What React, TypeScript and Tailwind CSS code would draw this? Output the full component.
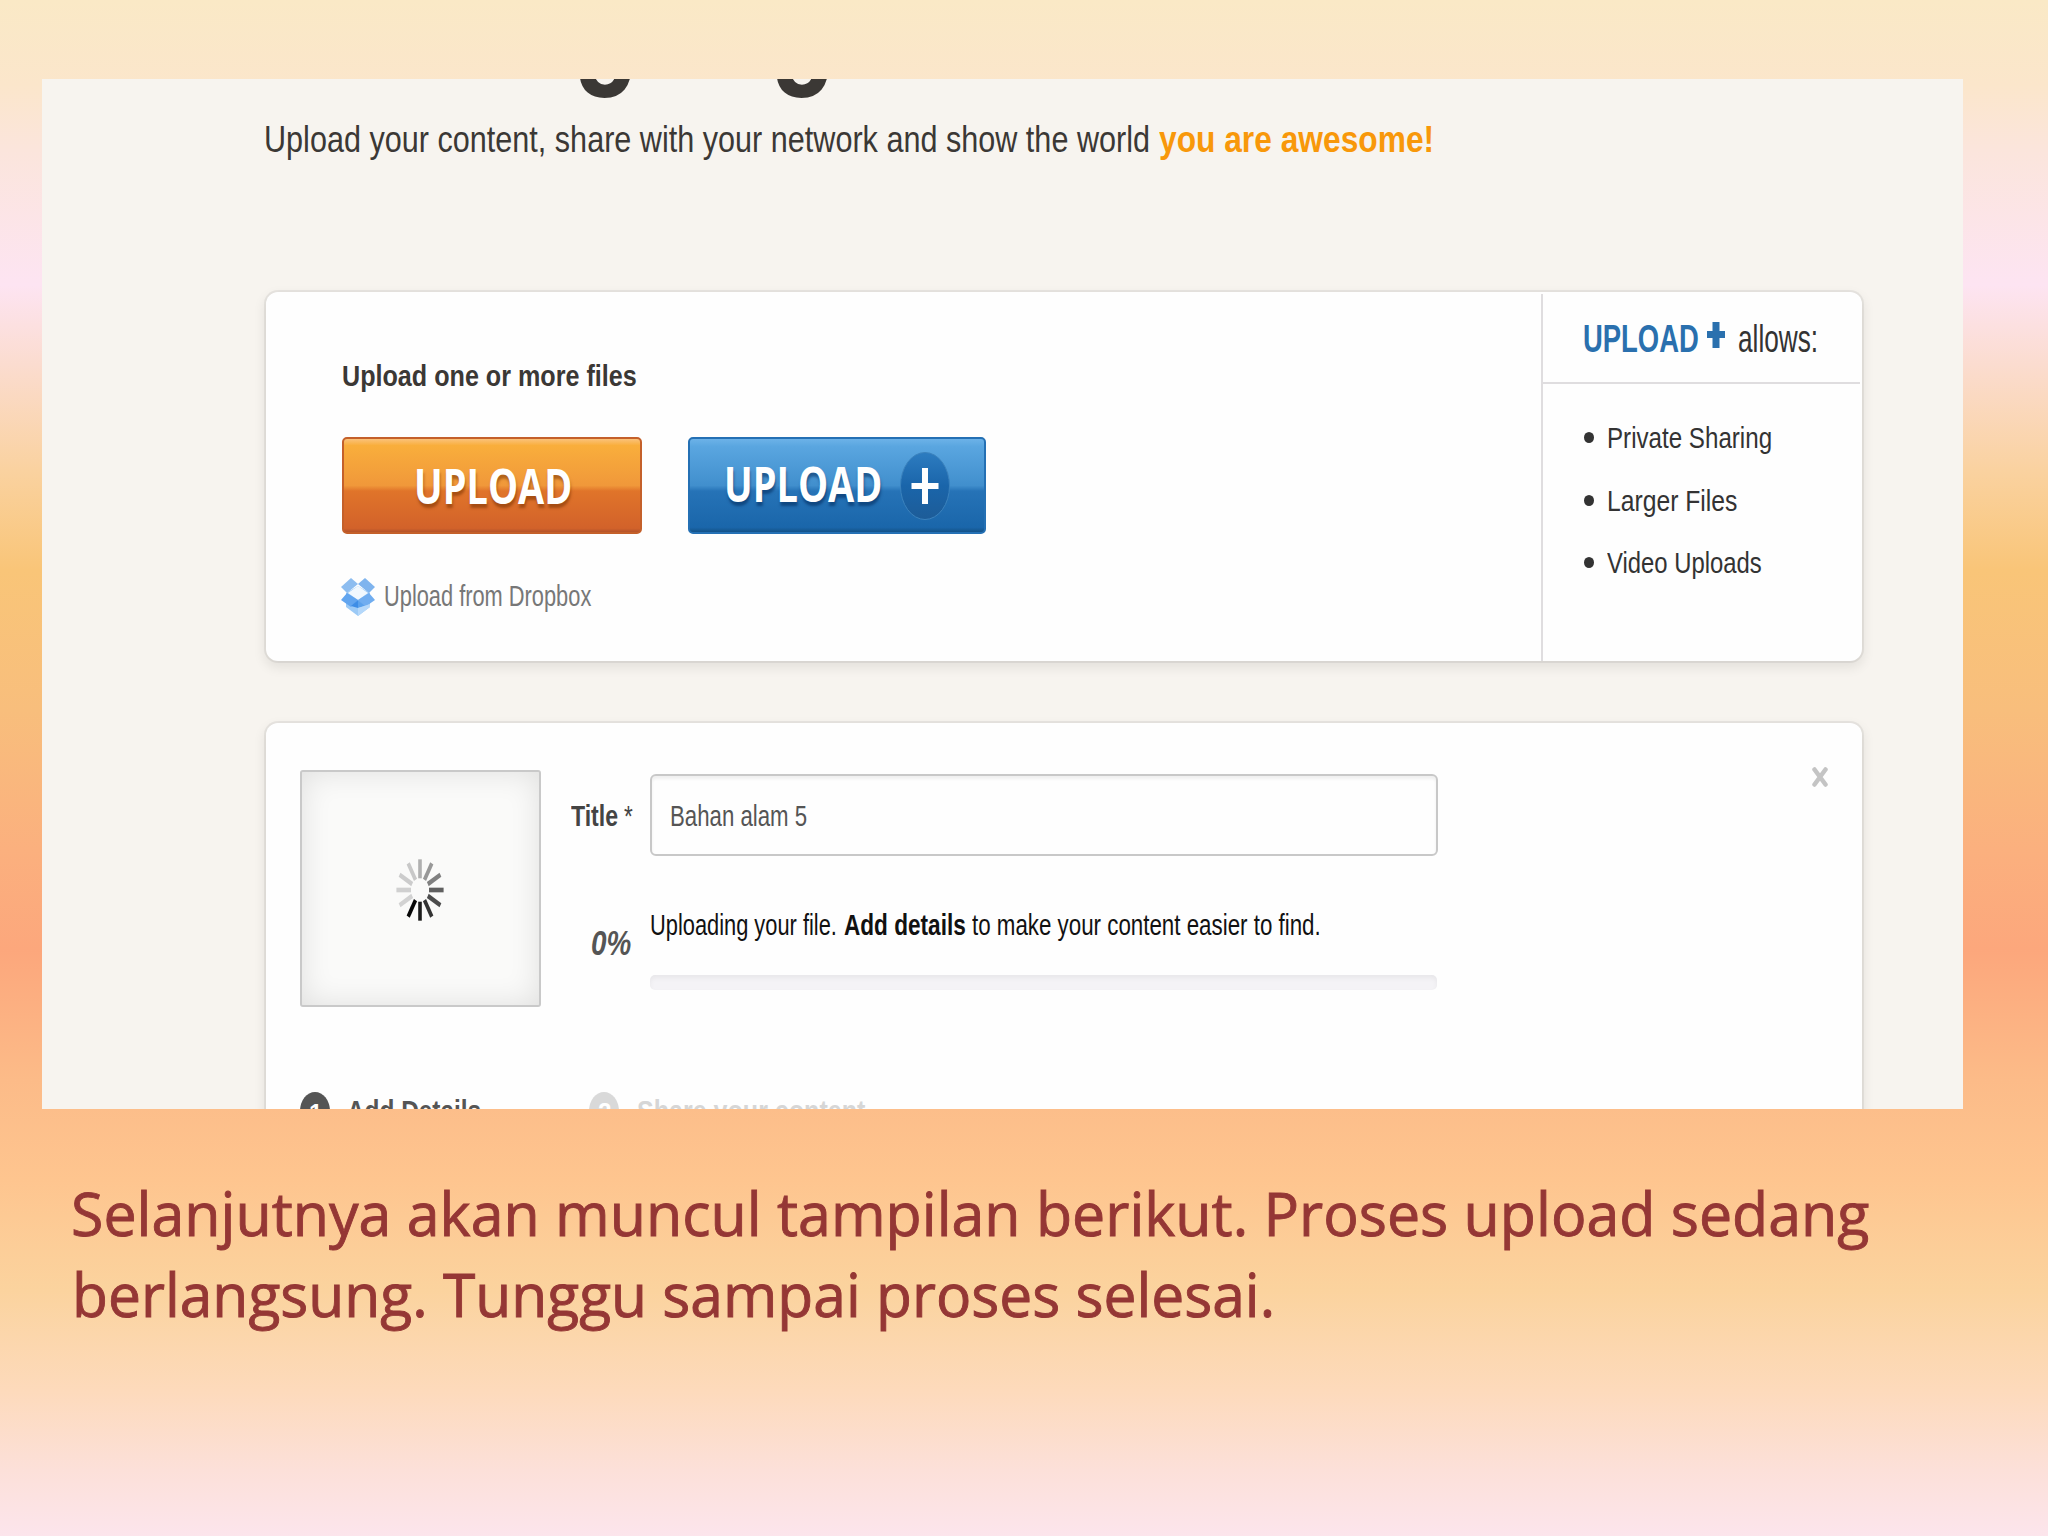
import { ReactNode, useLayoutEffect, useRef, useState } from "react";
import clsx from "clsx";

// One line of text, squeezed sideways until it fills the width of its box
function Fit({ className, children }: { className?: string; children: ReactNode }) {
  const box = useRef<HTMLSpanElement>(null);
  const text = useRef<HTMLSpanElement>(null);
  const [scale, setScale] = useState(1);

  useLayoutEffect(() => {
    if (box.current && text.current) {
      setScale(box.current.clientWidth / text.current.offsetWidth);
    }
  }, []);

  return (
    <span ref={box} className={clsx("block shrink-0 leading-none", className)}>
      <span
        ref={text}
        className="inline-block origin-left whitespace-nowrap align-top"
        style={{ transform: `scaleX(${scale})` }}
      >
        {children}
      </span>
    </span>
  );
}

function DropboxIcon() {
  return (
    <svg className="h-[38px] w-[34px] shrink-0" viewBox="0 0 34 38">
      <path d="M5 15 L17 8 L29 15 L29 29 L17 38 L5 29 Z" fill="#9ccaf6" />
      <path d="M10 0 L17 6 L6 15 L0 9 Z" fill="#8dbdf0" />
      <path d="M24 0 L17 6 L28 15 L34 9 Z" fill="#7fb4ee" />
      <path d="M17 8 L27 15 L17 22 L7 15 Z" fill="#f1f8fe" />
      <path d="M6 15 L17 22 L10 29 L0 22 Z" fill="#62a5ef" />
      <path d="M28 15 L34 22 L24 29 L17 22 Z" fill="#70adf0" />
      <path d="M17 22 L17 30 L10 28 Z" fill="#3d8de6" />
      <path d="M17 22 L24 28 L17 30 Z" fill="#5aa1ec" />
      <path d="M17 30 L29 26 L29 29 L17 38 Z" fill="#b5d8fa" />
    </svg>
  );
}

const spokes = [
  "#b0b0b0",
  "#989898",
  "#808080",
  "#606060",
  "#4c4c4c",
  "#333333",
  "#1c1c1c",
  "#080808",
  "#d2d2d2",
  "#d0d0d0",
  "#cccccc",
  "#c8c8c8",
];

function Spinner() {
  return (
    <svg className="mr-[2px] h-[62px] w-[48px]" viewBox="-24 -31 48 62">
      <g transform="scale(1 1.3)">
        {spokes.map((color, i) => (
          <line
            key={i}
            x1="0"
            y1="-9"
            x2="0"
            y2="-23.6"
            stroke={color}
            strokeWidth="3.6"
            transform={`rotate(${i * 30})`}
          />
        ))}
      </g>
    </svg>
  );
}

const features = [
  { label: "Private Sharing", width: "w-[165px]" },
  { label: "Larger Files", width: "w-[130px]" },
  { label: "Video Uploads", width: "w-[155px]" },
];

export default function App() {
  return (
    <div className="h-[1536px] w-[2048px] overflow-hidden bg-[linear-gradient(180deg,#fae9c6_0px,#fbe6cb_85px,#fbe5dc_150px,#fde4f2_285px,#fbdccf_365px,#fad2a0_470px,#f9c578_570px,#f8be7c_710px,#fbb07e_850px,#fca77c_950px,#fcbb88_1080px,#fec58f_1180px,#fbd39e_1290px,#fddabb_1390px,#fce0d9_1470px,#fce5ec_1536px)] pl-[42px] pt-[79px] font-['Liberation_Sans',sans-serif]">
      <main className="h-[1030px] w-[1921px] overflow-hidden bg-[#f7f4ef] pl-[224px]">
        {/* Page title, scrolled almost out of view */}
        <div className="flex h-[19px] pl-[307px] text-[146px] font-bold text-[#3b3835]">
          <Fit className="-mt-[135px] mr-[131px] w-[66px]">g</Fit>
          <Fit className="-mt-[135px] w-[66px]">g</Fit>
        </div>

        <p className="mt-[23px] flex h-[38px] text-[37.5px] text-[#3b3835]">
          <Fit className="mr-[9px] w-[886px] -ml-[2px]">
            Upload your content, share with your network and show the world
          </Fit>
          <Fit className="w-[275px] font-bold text-[#f8980a]">you are awesome!</Fit>
        </p>

        {/* Upload card */}
        <section className="mt-[133px] flex h-[369px] w-[1596px] rounded-[12px] bg-[#fefefe] shadow-[0_0_0_2px_rgba(0,0,0,0.06),0_5px_12px_2px_rgba(0,0,0,0.08)]">
          <div className="flex-1 pl-[76px] pt-[69px]">
            <h2 className="text-[30px] font-bold text-[#3b3835]">
              <Fit className="w-[295px]">Upload one or more files</Fit>
            </h2>

            <div className="mt-[46px] flex gap-[46px] font-['Open_Sans',sans-serif] text-[48px] font-bold text-white">
              <button className="flex h-[97px] w-[300px] rounded-[5px] border-2 border-[#c4602a] bg-[linear-gradient(180deg,#fbc27a_0%,#f9ae3c_7%,#f0983a_50%,#e0742a_56%,#d2622a_96%,#b4532a_100%)] pl-[70px] pt-[23px] [text-shadow:1px_4px_3px_rgba(120,50,0,0.55)]">
                <Fit className="w-[158px]">UPLOAD</Fit>
              </button>
              <button className="flex h-[97px] w-[298px] rounded-[5px] border-2 border-[#2470b4] bg-[linear-gradient(180deg,#6cb2e8_0%,#5aa6e0_8%,#418fcd_50%,#2673b7_56%,#1a66aa_95%,#135288_100%)] pl-[34px] [text-shadow:1px_4px_3px_rgba(0,40,90,0.55)]">
                <Fit className="mt-[21px] w-[158px]">UPLOAD</Fit>
                <svg className="ml-[17px] mt-[12px] h-[70px] w-[52px]" viewBox="0 0 52 70">
                  <defs>
                    <linearGradient id="plus" x1="0" y1="0" x2="0" y2="1">
                      <stop offset="0" stopColor="#2d7cc0" />
                      <stop offset="0.5" stopColor="#1a65aa" />
                      <stop offset="1" stopColor="#1d5c98" />
                    </linearGradient>
                  </defs>
                  <ellipse cx="26" cy="35" rx="24.5" ry="33.5" fill="url(#plus)" stroke="#3b82bd" />
                  <path d="M26 17 V53 M12.500 35 H39.500" stroke="#fff" strokeWidth="6" />
                </svg>
              </button>
            </div>

            <a className="-ml-px mt-[44px] flex text-[29.5px] text-[#777]">
              <DropboxIcon />
              <Fit className="ml-[9px] mt-[3px] w-[207px]">Upload from Dropbox</Fit>
            </a>
          </div>

          <aside className="mt-[2px] w-[321px] border-l-2 border-[#dfdddf] pr-[2px] text-[#333]">
            <h3 className="flex h-[90px] border-b-2 border-[#dfdddf] pl-[40px] pt-[25px] text-[39px]">
              <Fit className="w-[116px] font-bold text-[#2a70ae]">UPLOAD</Fit>
              <svg className="ml-[8px] mt-[3px] h-[26px] w-[18px]" viewBox="0 0 18 26">
                <path d="M9 0 V26 M0 12.500 H18" stroke="#2a70ae" strokeWidth="7" />
              </svg>
              <Fit className="ml-[13px] w-[80px]">allows:</Fit>
            </h3>
            <ul className="pl-[41px] pt-[39px] text-[30px]">
              {features.map((feature) => (
                <li key={feature.label} className="flex h-[62.5px]">
                  <span className="mr-[13px] mt-[9px] h-[11px] w-[10px] rounded-[50%] bg-[#333]" />
                  <Fit className={feature.width}>{feature.label}</Fit>
                </li>
              ))}
            </ul>
          </aside>
        </section>

        {/* File in progress */}
        <section className="mt-[62px] h-[600px] w-[1596px] rounded-[12px] bg-[#fefefe] pl-[34px] pt-[47px] shadow-[0_0_0_2px_rgba(0,0,0,0.06),0_5px_12px_2px_rgba(0,0,0,0.08)]">
          <div className="flex h-[237px]">
            <div className="flex w-[241px] items-center justify-center rounded-[3px] border-2 border-[#c9c9c9] bg-[#fafaf9] pt-[3px] shadow-[inset_0_0_30px_rgba(0,0,0,0.11)]">
              <Spinner />
            </div>

            <div className="ml-[29px] w-[80px] text-[#444]">
              <div className="ml-px mt-[31px] flex text-[30px]">
                <Fit className="w-[47px] font-bold">Title</Fit>
                <Fit className="ml-[6px] w-[9px]">*</Fit>
              </div>
              <div className="ml-[21px] mt-[95px] text-[35.5px] font-bold italic text-[#555]">
                <Fit className="w-[40px]">0%</Fit>
              </div>
            </div>

            <div className="w-[788px] pt-[4px]">
              <div className="h-[82px] rounded-[6px] border-2 border-[#c8c8c8] pl-[18px] pt-[25px] text-[30px] text-[#555] shadow-[inset_0_3px_3px_rgba(0,0,0,0.06)]">
                <Fit className="w-[137px]">Bahan alam 5</Fit>
              </div>
              <p className="mt-[54px] flex text-[30px] text-[#111]">
                <Fit className="w-[187px]">Uploading your file.</Fit>
                <Fit className="ml-[7px] w-[122px] font-bold">Add details</Fit>
                <Fit className="ml-[6px] w-[349px]">to make your content easier to find.</Fit>
              </p>
              <div className="mt-[35px] h-[15px] w-[787px] rounded-[5px] bg-[#f4f3f6] shadow-[inset_0_3px_5px_rgba(0,0,0,0.05)]" />
            </div>

            <svg className="ml-[374px] mt-[-3px] h-[20px] w-[16px]" viewBox="0 0 16 20">
              <path d="M2.500 2.500 L13.500 17.500 M13.500 2.500 L2.500 17.500" stroke="#c4c4c4" strokeWidth="4.500" strokeLinecap="round" />
            </svg>
          </div>

          <div className="mt-[85px] flex text-[30px] font-bold">
            <span className="flex h-[38px] w-[30px] justify-center rounded-[50%] bg-[#555] pt-[8px] text-white">
              <Fit className="w-[13px] text-[26px]">1</Fit>
            </span>
            <Fit className="ml-[17px] mt-[4px] w-[134px] text-[#555]">Add Details</Fit>
            <span className="ml-[108px] flex h-[38px] w-[30px] justify-center rounded-[50%] bg-[#d9d9d9] pt-[7px] text-white">
              <Fit className="w-[13px] text-[26px]">2</Fit>
            </span>
            <Fit className="ml-[18px] mt-[4px] w-[228px] text-[#d6d6d6]">Share your content</Fit>
          </div>
        </section>
      </main>

      {/* Slide caption */}
      <div className="ml-[29px] mt-[74px] font-['Open_Sans',sans-serif] text-[60px] text-[#953735] [-webkit-text-stroke:0.9px_#953735]">
        <Fit className="w-[1798px]">Selanjutnya akan muncul tampilan berikut. Proses upload sedang</Fit>
        <Fit className="ml-px mt-[21px] w-[1203px]">berlangsung. Tunggu sampai proses selesai.</Fit>
      </div>
    </div>
  );
}
